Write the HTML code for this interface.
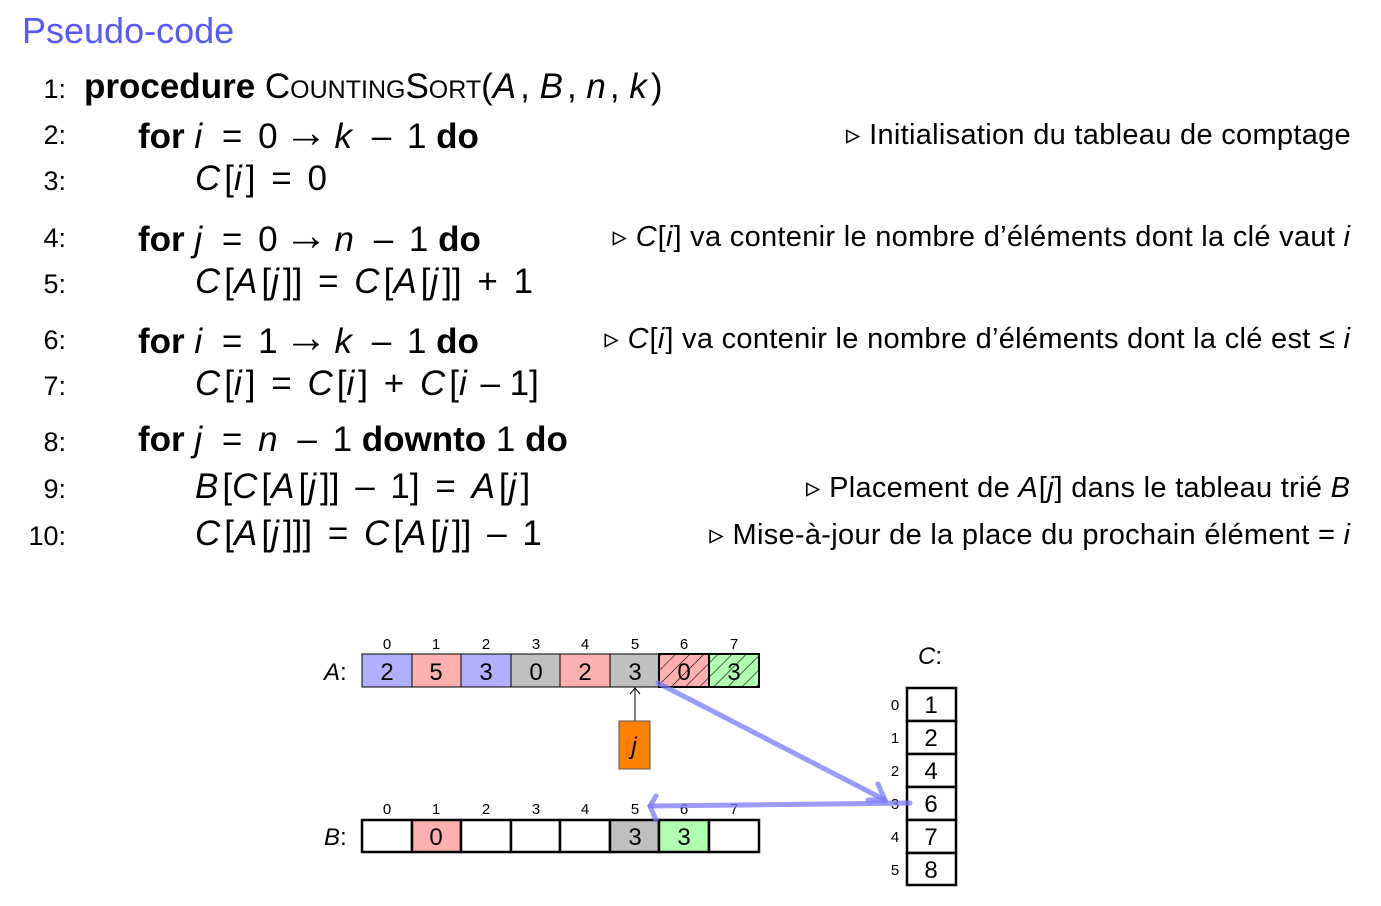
<!DOCTYPE html>
<html><head><meta charset="utf-8"><style>
body{margin:0;width:1381px;height:906px;background:#fff;position:relative;overflow:hidden;font-family:"Liberation Sans",sans-serif;color:#000}
.t{position:absolute;white-space:nowrap;line-height:1}
.n{font-size:27px;text-align:right;width:66px;left:0}
.c{font-size:35px}
.m{font-size:29px;right:30px;letter-spacing:0.3px}
i{font-style:italic;letter-spacing:1px}
.c i{letter-spacing:4px}
.o{margin:0 0.45em}
.ar{font-size:1.25em;line-height:0.8;margin:0 0.15em;vertical-align:1px}
.sc{font-variant:small-caps}
</style></head><body>
<div class="t" style="left:22px;top:13px;font-size:36px;color:#5858ff">Pseudo-code</div>

<div class="t n" style="top:76px">1:</div>
<div class="t c" style="left:84px;top:69px"><b>procedure</b> <span class="sc">CountingSort</span>(<i>A</i>, <i>B</i>, <i>n</i>, <i>k</i>)</div>
<div class="t n" style="top:122px">2:</div>
<div class="t c" style="left:138px;top:115px"><b>for</b> <i>i</i><span class="o">=</span>0<span class="ar">→</span><i>k</i><span class="o">–</span>1 <b>do</b></div>
<div class="t m" style="top:121px">▹ Initialisation du tableau de comptage</div>
<div class="t n" style="top:168px">3:</div>
<div class="t c" style="left:195px;top:161px"><i>C</i>[<i>i</i>]<span class="o">=</span>0</div>
<div class="t n" style="top:225px">4:</div>
<div class="t c" style="left:138px;top:218px"><b>for</b> <i>j</i><span class="o">=</span>0<span class="ar">→</span><i>n</i><span class="o">–</span>1 <b>do</b></div>
<div class="t m" style="top:223px">▹ <i>C</i>[<i>i</i>] va contenir le nombre d’éléments dont la clé vaut <i>i</i></div>
<div class="t n" style="top:271px">5:</div>
<div class="t c" style="left:195px;top:264px"><i>C</i>[<i>A</i>[<i>j</i>]]<span class="o">=</span><i>C</i>[<i>A</i>[<i>j</i>]]<span class="o">+</span>1</div>
<div class="t n" style="top:327px">6:</div>
<div class="t c" style="left:138px;top:320px"><b>for</b> <i>i</i><span class="o">=</span>1<span class="ar">→</span><i>k</i><span class="o">–</span>1 <b>do</b></div>
<div class="t m" style="top:325px">▹ <i>C</i>[<i>i</i>] va contenir le nombre d’éléments dont la clé est ≤ <i>i</i></div>
<div class="t n" style="top:373px">7:</div>
<div class="t c" style="left:195px;top:366px"><i>C</i>[<i>i</i>]<span class="o">=</span><i>C</i>[<i>i</i>]<span class="o">+</span><i>C</i>[<i>i</i> – 1]</div>
<div class="t n" style="top:429px">8:</div>
<div class="t c" style="left:138px;top:422px"><b>for</b> <i>j</i><span class="o">=</span><i>n</i><span class="o">–</span>1 <b>downto</b> 1 <b>do</b></div>
<div class="t n" style="top:476px">9:</div>
<div class="t c" style="left:195px;top:469px"><i>B</i>[<i>C</i>[<i>A</i>[<i>j</i>]]<span class="o">–</span>1]<span class="o">=</span><i>A</i>[<i>j</i>]</div>
<div class="t m" style="top:474px">▹ Placement de <i>A</i>[<i>j</i>] dans le tableau trié <i>B</i></div>
<div class="t n" style="top:523px">10:</div>
<div class="t c" style="left:195px;top:516px"><i>C</i>[<i>A</i>[<i>j</i>]]]<span class="o">=</span><i>C</i>[<i>A</i>[<i>j</i>]]<span class="o">–</span>1</div>
<div class="t m" style="top:521px">▹ Mise-à-jour de la place du prochain élément = <i>i</i></div>

<svg style="position:absolute;left:0;top:0" width="1381" height="906" font-family="Liberation Sans, sans-serif">
<defs>
<pattern id="h" width="10" height="10" patternUnits="userSpaceOnUse" patternTransform="rotate(45)"><line x1="0" y1="0" x2="0" y2="10" stroke="#000" stroke-width="1.2"/></pattern>
</defs>
<g font-size="15" text-anchor="middle">
<text x="387" y="649">0</text><text x="436" y="649">1</text><text x="486" y="649">2</text><text x="536" y="649">3</text><text x="585" y="649">4</text><text x="635" y="649">5</text><text x="684" y="649">6</text><text x="734" y="649">7</text>
<text x="387" y="814">0</text><text x="436" y="814">1</text><text x="486" y="814">2</text><text x="536" y="814">3</text><text x="585" y="814">4</text><text x="635" y="814">5</text><text x="684" y="814">6</text><text x="734" y="814">7</text>
</g>
<text x="324" y="680" font-size="24" font-style="italic">A<tspan font-style="normal">:</tspan></text>
<text x="324" y="845" font-size="24" font-style="italic">B<tspan font-style="normal">:</tspan></text>
<text x="918" y="664" font-size="24" font-style="italic">C<tspan font-style="normal">:</tspan></text>
<g stroke="#000" stroke-width="1">
<rect x="362" y="654" width="50" height="33" fill="#b0b0ff"/>
<rect x="412" y="654" width="49" height="33" fill="#ffb0b0"/>
<rect x="461" y="654" width="50" height="33" fill="#b0b0ff"/>
<rect x="511" y="654" width="49" height="33" fill="#c0c0c0"/>
<rect x="560" y="654" width="50" height="33" fill="#ffb0b0"/>
<rect x="610" y="654" width="49" height="33" fill="#c0c0c0"/>
<rect x="659" y="654" width="50" height="33" fill="#ffb0b0" stroke-width="2"/>
<rect x="659" y="654" width="50" height="33" fill="url(#h)" stroke-width="2"/>
<rect x="709" y="654" width="50" height="33" fill="#b0ffb0" stroke-width="2"/>
<rect x="709" y="654" width="50" height="33" fill="url(#h)" stroke-width="2"/>
</g>
<g font-size="24" text-anchor="middle">
<text x="387" y="680">2</text><text x="436" y="680">5</text><text x="486" y="680">3</text><text x="536" y="680">0</text><text x="585" y="680">2</text><text x="635" y="680">3</text><text x="684" y="680">0</text><text x="734" y="680">3</text>
</g>
<g stroke="#000" stroke-width="2.5" fill="#fff">
<rect x="362" y="820" width="50" height="32"/>
<rect x="412" y="820" width="49" height="32" fill="#ffb0b0"/>
<rect x="461" y="820" width="50" height="32"/>
<rect x="511" y="820" width="49" height="32"/>
<rect x="560" y="820" width="50" height="32"/>
<rect x="610" y="820" width="49" height="32" fill="#c0c0c0"/>
<rect x="659" y="820" width="50" height="32" fill="#b0ffb0"/>
<rect x="709" y="820" width="50" height="32"/>
</g>
<g font-size="24" text-anchor="middle">
<text x="436" y="845">0</text><text x="635" y="845">3</text><text x="684" y="845">3</text>
</g>
<line x1="635" y1="688" x2="635" y2="721" stroke="#000"/>
<path d="M630 694 L635 688 L640 694" fill="none" stroke="#000"/>
<rect x="619" y="721" width="31" height="48" fill="#ff8000" stroke="#555"/>
<text x="634" y="754" font-size="24" font-style="italic" text-anchor="middle">j</text>
<g stroke="#000" stroke-width="2.5" fill="#fff">
<rect x="907" y="688" width="49" height="33"/><rect x="907" y="721" width="49" height="33"/><rect x="907" y="754" width="49" height="33"/><rect x="907" y="787" width="49" height="33"/><rect x="907" y="820" width="49" height="33"/><rect x="907" y="853" width="49" height="32"/>
</g>
<g font-size="24" text-anchor="middle">
<text x="931" y="713">1</text><text x="931" y="746">2</text><text x="931" y="779">4</text><text x="931" y="812">6</text><text x="931" y="845">7</text><text x="931" y="878">8</text>
</g>
<g font-size="15" text-anchor="middle">
<text x="895" y="710">0</text><text x="895" y="743">1</text><text x="895" y="776">2</text><text x="895" y="809">3</text><text x="895" y="842">4</text><text x="895" y="875">5</text>
</g>
<g stroke="#7878ff" stroke-opacity="0.75" stroke-width="5" fill="none" stroke-linecap="round">
<path d="M658 683 L885 800"/>
<path d="M868 800 L885 800 L878 784"/>
<path d="M910 803 L650 806"/>
<path d="M656 796 L650 806 L656 820"/>
</g>
</svg>
</body></html>
